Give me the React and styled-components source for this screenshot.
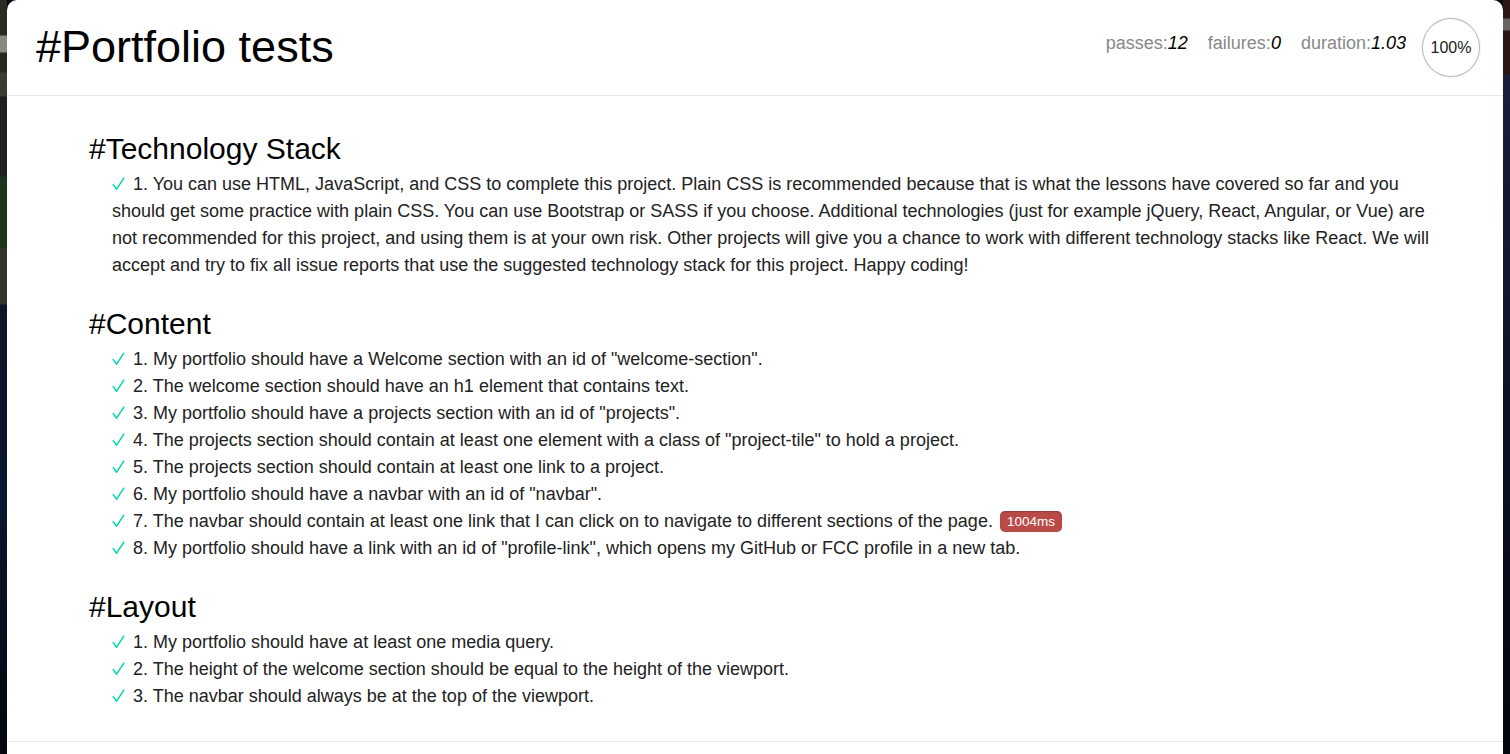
import React from "react";
import styled, { createGlobalStyle } from "styled-components";

const GlobalStyle = createGlobalStyle`
  html, body {
    margin: 0;
    padding: 0;
    height: 100%;
    overflow: hidden;
    background: #05070f;
  }
  #root {
    height: 100%;
  }
`;

const Page = styled.div`
  display: flex;
  height: 100vh;
  font-family: "Liberation Sans", Arial, sans-serif;
`;

const Backdrop = styled.div`
  width: 7px;
  flex: none;
  background: ${(p) =>
    p.side === "left"
      ? `linear-gradient(to bottom,
          #2c2823 0px, #2c2823 35px,
          #8a8882 36px, #8a8882 52px,
          #2a2620 53px, #2a2620 72px,
          #3b3a35 73px, #3b3a35 96px,
          #201f1c 97px, #201f1c 176px,
          #1b361c 177px, #1b361c 248px,
          #35342c 249px, #35342c 304px,
          #0c1428 305px, #0a1630 500px, #03060d 754px)`
      : `linear-gradient(to bottom,
          #2b1616 0px, #2b1616 18px,
          #6a6460 19px, #6a6460 30px,
          #2b1616 31px, #2b1616 74px,
          #1a1f3a 75px, #0d1226 400px, #03060d 754px)`};
`;

const Modal = styled.div`
  flex: 1;
  display: flex;
  flex-direction: column;
  background: #fff;
  border-radius: 10px 10px 0 0;
  overflow: hidden;
`;

const Header = styled.div`
  height: 95px;
  flex: none;
  display: flex;
  align-items: center;
  justify-content: space-between;
  padding: 0 23px 0 29px;
  border-bottom: 1px solid #e5e5e5;
`;

const Title = styled.h1`
  margin: 0 0 2px;
  font-size: 45px;
  line-height: 45px;
  font-weight: normal;
  color: #000;
`;

const Stats = styled.div`
  display: flex;
  align-items: center;
`;

const StatList = styled.ul`
  list-style: none;
  display: flex;
  gap: 20px;
  margin: 0 16px 8px 0;
  padding: 0;
  font-size: 18px;
  color: #888;
`;

const Stat = styled.li`
  em {
    color: #000;
    font-style: italic;
  }
`;

const Ring = styled.div`
  width: 56px;
  height: 56px;
  border-radius: 50%;
  border: 1.5px solid #b8b8b8;
  box-shadow: 0 0 2px rgba(0, 0, 0, 0.18);
  display: flex;
  align-items: center;
  justify-content: center;
  font-size: 16px;
  color: #222;
  padding-top: 1px;
  box-sizing: content-box;
`;

const Body = styled.div`
  padding: 35px 30px 31px 82px;
  flex: none;
`;

const Suite = styled.section`
  & + & {
    margin-top: 27px;
  }
`;

const SuiteTitle = styled.h2`
  margin: 0 0 4px;
  font-size: 30px;
  line-height: 36px;
  font-weight: normal;
  color: #000;
`;

const Tests = styled.ul`
  list-style: none;
  margin: 0;
  padding: 0 0 0 23px;
`;

const Test = styled.li`
  font-size: 18px;
  line-height: 27px;
  color: #222;
  white-space: nowrap;
`;

const CheckIcon = styled.svg`
  width: 13px;
  height: 14px;
  margin-right: 8px;
  vertical-align: -1px;
`;

const Check = () => (
  <CheckIcon viewBox="0 0 13 14" fill="none">
    <path
      d="M1.2 7.6 L4.6 12.2 L11.8 1.2"
      stroke="#00d6b2"
      strokeWidth="1.5"
      strokeLinecap="round"
      strokeLinejoin="round"
    />
  </CheckIcon>
);

const Duration = styled.span`
  display: inline-block;
  margin-left: 7px;
  padding: 0 7px;
  height: 21px;
  line-height: 21px;
  border-radius: 5px;
  background: #b94a48;
  color: #fff;
  font-size: 13.5px;
  vertical-align: 1px;
  box-shadow: inset 0 1px 1px rgba(0, 0, 0, 0.2);
`;

const Footer = styled.div`
  flex: 1;
  border-top: 1px solid #e5e5e5;
`;

const suites = [
  {
    title: "#Technology Stack",
    tests: [
      {
        lines: [
          "1. You can use HTML, JavaScript, and CSS to complete this project. Plain CSS is recommended because that is what the lessons have covered so far and you",
          "should get some practice with plain CSS. You can use Bootstrap or SASS if you choose. Additional technologies (just for example jQuery, React, Angular, or Vue) are",
          "not recommended for this project, and using them is at your own risk. Other projects will give you a chance to work with different technology stacks like React. We will",
          "accept and try to fix all issue reports that use the suggested technology stack for this project. Happy coding!",
        ],
      },
    ],
  },
  {
    title: "#Content",
    tests: [
      { lines: ['1. My portfolio should have a Welcome section with an id of "welcome-section".'] },
      { lines: ["2. The welcome section should have an h1 element that contains text."] },
      { lines: ['3. My portfolio should have a projects section with an id of "projects".'] },
      { lines: ['4. The projects section should contain at least one element with a class of "project-tile" to hold a project.'] },
      { lines: ["5. The projects section should contain at least one link to a project."] },
      { lines: ['6. My portfolio should have a navbar with an id of "navbar".'] },
      {
        lines: ["7. The navbar should contain at least one link that I can click on to navigate to different sections of the page."],
        duration: "1004ms",
      },
      { lines: ['8. My portfolio should have a link with an id of "profile-link", which opens my GitHub or FCC profile in a new tab.'] },
    ],
  },
  {
    title: "#Layout",
    tests: [
      { lines: ["1. My portfolio should have at least one media query."] },
      { lines: ["2. The height of the welcome section should be equal to the height of the viewport."] },
      { lines: ["3. The navbar should always be at the top of the viewport."] },
    ],
  },
];

export default function App() {
  return (
    <>
      <GlobalStyle />
      <Page>
        <Backdrop side="left" />
        <Modal>
          <Header>
            <Title>#Portfolio tests</Title>
            <Stats>
              <StatList>
                <Stat>
                  passes:<em>12</em>
                </Stat>
                <Stat>
                  failures:<em>0</em>
                </Stat>
                <Stat>
                  duration:<em>1.03</em>
                </Stat>
              </StatList>
              <Ring>100%</Ring>
            </Stats>
          </Header>
          <Body>
            {suites.map((suite) => (
              <Suite key={suite.title}>
                <SuiteTitle>{suite.title}</SuiteTitle>
                <Tests>
                  {suite.tests.map((test, i) => (
                    <Test key={i}>
                      <Check />
                      {test.lines.map((line, j) => (
                        <React.Fragment key={j}>
                          {j > 0 && <br />}
                          {line}
                        </React.Fragment>
                      ))}
                      {test.duration && <Duration>{test.duration}</Duration>}
                    </Test>
                  ))}
                </Tests>
              </Suite>
            ))}
          </Body>
          <Footer />
        </Modal>
        <Backdrop side="right" />
      </Page>
    </>
  );
}
